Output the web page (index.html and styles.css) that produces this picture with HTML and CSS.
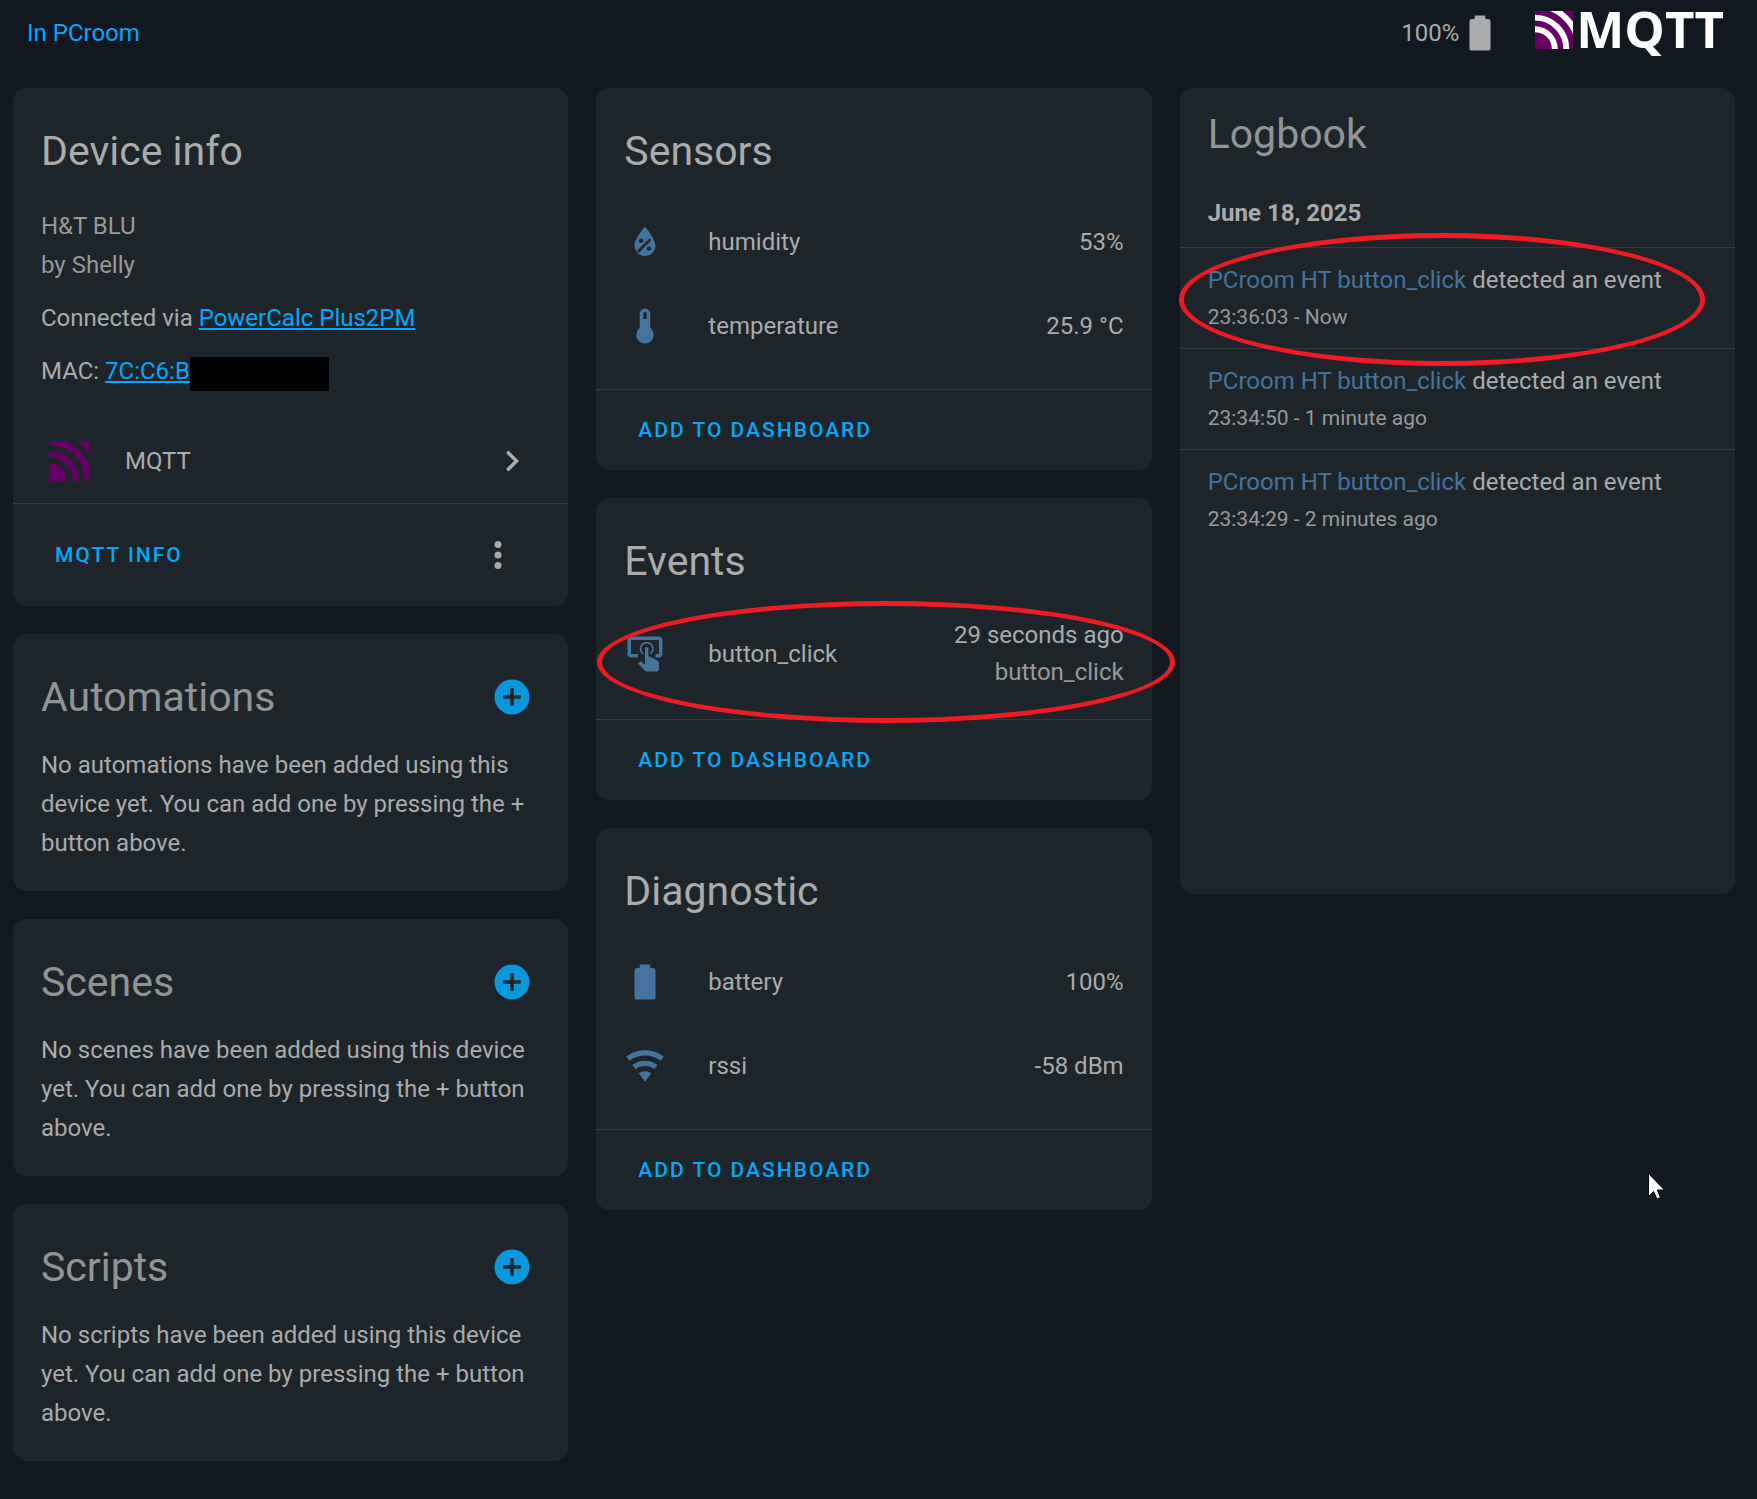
FILE: index.html
```html
<!DOCTYPE html>
<html lang="en">
<head>
  <meta charset="UTF-8" />
  <meta name="viewport" content="width=device-width, initial-scale=1.0" />
  <title>PCroom HT</title>
  <link rel="stylesheet" href="styles.css">
</head>
<body>
  <header class="page-header">
    <a class="area" href="#">In PCroom</a>
    <div class="header-right">
      <span class="battery">100%
        <svg class="icon" viewBox="0 0 24 24"><path d="M16.67 4H15V2H9v2H7.33C6.6 4 6 4.6 6 5.33v15.34C6 21.4 6.6 22 7.33 22h9.34c.73 0 1.33-.6 1.33-1.33V5.33C18 4.6 17.4 4 16.67 4z"/></svg>
      </span>
      <div class="logo">
        <svg class="logo-mark" viewBox="0 0 40 40">
          <rect width="40" height="40" rx="1.5" fill="#660066"/>
          <g fill="none" stroke="#fff" stroke-width="6.2">
            <path d="M0 19.2A20.8 20.8 0 0 1 20.8 40"/>
            <path d="M0 7A33 33 0 0 1 33 40"/>
            <path d="M0 -6A46 46 0 0 1 46 40"/>
          </g>
        </svg>
        <span class="logo-text">MQTT</span>
      </div>
    </div>
  </header>

  <main class="columns">
    <div class="column">
      <section class="card">
        <h1>Device info</h1>
        <div class="content info">
          <div class="model">H&amp;T BLU<br>by Shelly</div>
          <div>Connected via <a href="#">PowerCalc Plus2PM</a></div>
          <div class="mac">MAC:&nbsp;<a href="#">7C:C6:B</a><span class="redacted"></span></div>
        </div>
        <a class="integration" href="#">
          <svg class="brand" viewBox="0 0 40 40">
            <rect width="40" height="40" rx="1.5" fill="#660066"/>
            <g class="brand-gap">
              <path d="M0 19.2A20.8 20.8 0 0 1 20.8 40"/>
              <path d="M0 7A33 33 0 0 1 33 40"/>
              <path d="M0 -6A46 46 0 0 1 46 40"/>
            </g>
          </svg>
          <span class="name">MQTT</span>
          <svg class="icon" viewBox="0 0 24 24"><path d="M8.59 16.58 13.17 12 8.59 7.41 10 6l6 6-6 6z"/></svg>
        </a>
        <div class="actions tall">
          <button type="button">MQTT info</button>
          <button type="button" class="icon-button" aria-label="Menu">
            <svg class="icon" viewBox="0 0 24 24"><path d="M12 16a2 2 0 0 1 2 2 2 2 0 0 1-2 2 2 2 0 0 1-2-2 2 2 0 0 1 2-2m0-6a2 2 0 0 1 2 2 2 2 0 0 1-2 2 2 2 0 0 1-2-2 2 2 0 0 1 2-2m0-6a2 2 0 0 1 2 2 2 2 0 0 1-2 2 2 2 0 0 1-2-2 2 2 0 0 1 2-2z"/></svg>
          </button>
        </div>
      </section>

      <section class="card">
        <div class="title-row">
          <h1>Automations</h1>
          <button type="button" class="add" aria-label="Add automation">
            <svg class="icon" viewBox="0 0 24 24"><path d="M17 13h-4v4h-2v-4H7v-2h4V7h2v4h4m-5-9A10 10 0 0 0 2 12a10 10 0 0 0 10 10 10 10 0 0 0 10-10A10 10 0 0 0 12 2z"/></svg>
          </button>
        </div>
        <p class="content">No automations have been added using this device yet. You can add one by pressing the + button above.</p>
      </section>

      <section class="card">
        <div class="title-row">
          <h1>Scenes</h1>
          <button type="button" class="add" aria-label="Add scene">
            <svg class="icon" viewBox="0 0 24 24"><path d="M17 13h-4v4h-2v-4H7v-2h4V7h2v4h4m-5-9A10 10 0 0 0 2 12a10 10 0 0 0 10 10 10 10 0 0 0 10-10A10 10 0 0 0 12 2z"/></svg>
          </button>
        </div>
        <p class="content">No scenes have been added using this device yet. You can add one by pressing the + button above.</p>
      </section>

      <section class="card">
        <div class="title-row">
          <h1>Scripts</h1>
          <button type="button" class="add" aria-label="Add script">
            <svg class="icon" viewBox="0 0 24 24"><path d="M17 13h-4v4h-2v-4H7v-2h4V7h2v4h4m-5-9A10 10 0 0 0 2 12a10 10 0 0 0 10 10 10 10 0 0 0 10-10A10 10 0 0 0 12 2z"/></svg>
          </button>
        </div>
        <p class="content">No scripts have been added using this device yet. You can add one by pressing the + button above.</p>
      </section>
    </div>

    <div class="column">
      <section class="card">
        <h1>Sensors</h1>
        <div class="content entities">
          <div class="entity">
            <svg class="icon" viewBox="0 0 24 24"><path d="M12 3.25S6 10 6 14c0 3.32 2.69 6 6 6s6-2.68 6-6c0-4-6-10.750-6-10.750m2.470 6.720 1.060 1.060-7.060 7.060-1.060-1.060 7.060-7.060M9.750 10A1.250 1.250 0 0 1 11 11.250a1.250 1.250 0 0 1-1.250 1.250 1.250 1.250 0 0 1-1.250-1.250A1.250 1.250 0 0 1 9.750 10m4.500 4.500a1.250 1.250 0 0 1 1.250 1.250A1.250 1.250 0 0 1 14.250 17 1.250 1.250 0 0 1 13 15.750a1.250 1.250 0 0 1 1.250-1.250z" fill-rule="evenodd"/></svg>
            <span class="name">humidity</span>
            <span>53%</span>
          </div>
          <div class="entity">
            <svg class="icon" viewBox="0 0 24 24"><path d="M15 13V5a3 3 0 0 0-6 0v8a5 5 0 1 0 6 0m-3-9a1 1 0 0 1 1 1v3h-2V5a1 1 0 0 1 1-1z" fill-rule="evenodd"/></svg>
            <span class="name">temperature</span>
            <span>25.9 °C</span>
          </div>
        </div>
        <div class="actions"><button type="button">Add to dashboard</button></div>
      </section>

      <section class="card">
        <h1>Events</h1>
        <div class="content entities">
          <div class="entity">
            <svg class="icon" viewBox="0 0 24 24"><path d="M13 5c2.210 0 4 1.790 4 4 0 1.500-.800 2.770-2 3.460v-1.220c.610-.550 1-1.350 1-2.240 0-1.660-1.340-3-3-3s-3 1.340-3 3c0 .890.390 1.690 1 2.240v1.220C9.800 11.770 9 10.500 9 9c0-2.210 1.790-4 4-4m7 15.500c-.030.820-.680 1.470-1.500 1.500H13c-.380 0-.740-.150-1-.430l-4-4.200.740-.770c.190-.210.460-.320.760-.320h.200L12 18V9c0-.550.450-1 1-1s1 .450 1 1v4.470l1.210.130 3.940 2.190c.530.240.850.770.850 1.350v3.360M20 2H4c-1.100 0-2 .900-2 2v8c0 1.110.900 2 2 2h4v-2H4V4h16v8h-2v2h2v-.040l.040.040c1.090 0 1.960-.910 1.960-2V4c0-1.100-.900-2-2-2z"/></svg>
            <span class="name">button_click</span>
            <span class="state">29 seconds ago<br><span class="secondary">button_click</span></span>
          </div>
        </div>
        <div class="actions"><button type="button">Add to dashboard</button></div>
        <div class="ring ring-event"></div>
      </section>

      <section class="card">
        <h1>Diagnostic</h1>
        <div class="content entities">
          <div class="entity">
            <svg class="icon" viewBox="0 0 24 24"><path d="M16.67 4H15V2H9v2H7.33C6.6 4 6 4.6 6 5.33v15.34C6 21.4 6.6 22 7.33 22h9.34c.73 0 1.33-.6 1.33-1.33V5.33C18 4.6 17.4 4 16.67 4z"/></svg>
            <span class="name">battery</span>
            <span>100%</span>
          </div>
          <div class="entity">
            <svg class="icon" viewBox="0 0 24 24"><path d="m12 21 3.600-4.800c-1-.750-2.250-1.200-3.600-1.200s-2.600.450-3.600 1.200L12 21m0-18C7.950 3 4.210 4.340 1.200 6.600L3 9c2.500-1.880 5.620-3 9-3s6.500 1.120 9 3l1.800-2.400C19.790 4.340 16.050 3 12 3m0 6c-2.700 0-5.190.890-7.200 2.400l1.800 2.400c1.500-1.130 3.370-1.800 5.400-1.800s3.900.670 5.400 1.800l1.800-2.400C17.190 9.890 14.700 9 12 9z"/></svg>
            <span class="name">rssi</span>
            <span>-58 dBm</span>
          </div>
        </div>
        <div class="actions"><button type="button">Add to dashboard</button></div>
      </section>
    </div>

    <div class="column">
      <section class="card logbook">
        <h1>Logbook</h1>
        <h2>June 18, 2025</h2>
        <div class="entry">
          <div><a href="#">PCroom HT button_click</a> detected an event</div>
          <div class="time">23:36:03 - Now</div>
        </div>
        <div class="entry">
          <div><a href="#">PCroom HT button_click</a> detected an event</div>
          <div class="time">23:34:50 - 1 minute ago</div>
        </div>
        <div class="entry">
          <div><a href="#">PCroom HT button_click</a> detected an event</div>
          <div class="time">23:34:29 - 2 minutes ago</div>
        </div>
        <div class="ring ring-log"></div>
      </section>
    </div>
  </main>

  <svg class="pointer" viewBox="0 0 17 27"><path d="M.5 .5v23l5-5 3.500 7.500 3.500-1.500-3.200-7.500h7.200z" fill="#fff" stroke="#000"/></svg>
</body>
</html>
```

FILE: styles.css
```css
* {
  box-sizing: border-box;
}
body {
  margin: 0;
  background: #11181f;
  color: #a9abad;
  font-family: Roboto, sans-serif;
  font-size: 24px;
  line-height: 39px;
}
a {
  color: #04a7fa;
}
h1, h2, p {
  margin: 0;
}
.icon {
  width: 42px;
  height: 42px;
  flex: none;
  display: block;
  fill: currentColor;
}

/* top bar */
.page-header {
  display: flex;
  justify-content: space-between;
  align-items: center;
  height: 66px;
  padding: 0 33px 0 27px;
}
.area {
  text-decoration: none;
}
.header-right, .battery, .logo {
  display: flex;
  align-items: center;
}
.header-right {
  gap: 34px;
}
.logo {
  gap: 3px;
  padding-bottom: 6px;
}
.logo-mark {
  width: 38px;
  height: 38px;
}
.logo-text {
  padding-bottom: 4px;
  color: #fff;
  font-family: "Open Sans", sans-serif;
  font-size: 51px;
  font-weight: 700;
  line-height: 56px;
}

/* cards */
.columns {
  display: grid;
  grid-template-columns: repeat(3, minmax(0, 1fr));
  gap: 28px;
  align-items: start;
  padding: 22px 22px 37px 13px;
}
.column {
  display: grid;
  gap: 28px;
}
.card {
  position: relative;
  background: #1e252a;
  border-radius: 14px;
}
h1 {
  padding: 21px 28px 14px;
  font-size: 41px;
  font-weight: 400;
  line-height: 84px;
}
.content {
  padding: 0 28px 28px;
}
.title-row {
  display: flex;
  justify-content: space-between;
  align-items: center;
  padding: 21px 35px 7px 28px;
}
.title-row h1 {
  padding: 0;
  color: #919496;
}
.info {
  display: grid;
  gap: 14px;
}
.model, .secondary {
  color: #97999a;
}
.mac {
  display: flex;
  align-items: flex-end;
}
.redacted {
  width: 139px;
  height: 34px;
  background: #000;
}
.integration {
  display: flex;
  align-items: center;
  gap: 28px;
  height: 84px;
  padding: 0 35px 0 28px;
  color: inherit;
  text-decoration: none;
}
.brand {
  width: 56px;
  height: 40px;
}
.brand-gap {
  fill: none;
  stroke: #1e252a;
  stroke-width: 6.2;
}
.name {
  flex: 1;
}
.actions {
  display: flex;
  justify-content: space-between;
  align-items: center;
  height: 81px;
  padding: 0 28px;
  border-top: 1px solid #323a3b;
}
.tall {
  height: 103px;
}
button {
  padding: 0 14px;
  border: 0;
  background: none;
  color: #04a7fa;
  font: 500 21px/63px Roboto, sans-serif;
  letter-spacing: 2px;
  text-transform: uppercase;
}
.icon-button {
  padding: 21px;
  color: #a9abad;
}
.add {
  padding: 0;
  color: #0898db;
}

/* entity rows */
.entities {
  display: grid;
  gap: 14px;
}
.entity {
  display: flex;
  align-items: center;
  gap: 42px;
  min-height: 70px;
}
.entity .icon {
  color: #44739e;
}
.state {
  line-height: 37px;
  text-align: right;
}

/* logbook */
.logbook {
  min-height: 806px;
}
.logbook h1 {
  padding: 4px 28px 0;
  color: #919496;
}
h2 {
  padding: 18px 28px 14px;
  font-size: 24px;
  font-weight: 700;
}
.entry {
  padding: 14px 28px 12px;
  border-top: 1px solid #323a3b;
  line-height: 37px;
}
.entry a {
  color: #44739e;
  text-decoration: none;
}
.time {
  color: #97999a;
  font-size: 21px;
}

/* marks drawn over the page */
.ring {
  position: absolute;
  border: 5px solid #ed1c24;
  border-radius: 50%;
  pointer-events: none;
  z-index: 1;
}
.ring-event {
  top: 103px;
  left: 1px;
  right: -23px;
  height: 122px;
}
.ring-log {
  top: 145px;
  left: -1px;
  right: 30px;
  height: 133px;
}
.pointer {
  position: absolute;
  top: 1173px;
  right: 92px;
  width: 17px;
  height: 27px;
}
```
